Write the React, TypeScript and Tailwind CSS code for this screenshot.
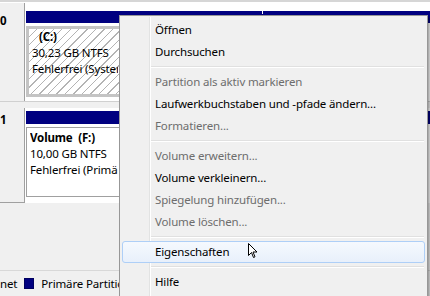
import React from 'react';

type Item = { label: string; disabled?: boolean; active?: boolean } | 'sep';

const menuItems: Item[] = [
  { label: 'Öffnen' },
  { label: 'Durchsuchen' },
  'sep',
  { label: 'Partition als aktiv markieren', disabled: true },
  { label: 'Laufwerkbuchstaben und -pfade ändern...' },
  { label: 'Formatieren...', disabled: true },
  'sep',
  { label: 'Volume erweitern...', disabled: true },
  { label: 'Volume verkleinern...' },
  { label: 'Spiegelung hinzufügen...', disabled: true },
  { label: 'Volume löschen...', disabled: true },
  'sep',
  { label: 'Eigenschaften', active: true },
  'sep',
  { label: 'Hilfe' },
];

function ContextMenu() {
  return (
    <div className="absolute left-[119px] top-[15px] w-[309px] h-[300px] border border-[#979797] bg-[#f0f0f0] pt-[3px] px-[2px] shadow-[2px_2px_2px_rgba(0,0,0,0.35)]">
      {/* gutter line */}
      <div className="absolute left-[29px] top-[1px] bottom-0 w-[2px] border-l border-[#e2e3e3] bg-white" />
      <div className="relative flex flex-col">
        {menuItems.map((item, i) =>
          item === 'sep' ? (
            <div key={i} className="h-[8px] flex items-center pl-[29px] pr-[1px]">
              <div className="w-full h-[2px] border-t border-[#e0e0e0] bg-white" />
            </div>
          ) : (
            <div
              key={i}
              className={`h-[22px] flex items-center pl-[32px] rounded-[3px] border ${
                item.active
                  ? 'border-[#aecff7] bg-[linear-gradient(#f5f9fe,#e8f0fb)]'
                  : 'border-transparent'
              } ${item.disabled ? 'text-[#6d6d6d]' : 'text-black'}`}
            >
              {item.label}
            </div>
          )
        )}
      </div>
    </div>
  );
}

function Cursor() {
  return (
    <svg className="absolute left-[248px] top-[243px]" width="10" height="16" viewBox="0 0 10 16">
      <path
        d="M0.5 0.5 L0.5 12.5 L3.5 9.5 L5.5 14.5 L7 13.8 L5 9 L9 9 Z"
        fill="#fff"
        stroke="#000"
        strokeWidth="1"
        strokeLinejoin="round"
      />
    </svg>
  );
}

export default function App() {
  return (
    <div className="relative w-[430px] h-[296px] overflow-hidden bg-[#f0f0f0] font-['Noto_Sans',sans-serif] text-[11.5px] tracking-[-0.15px] leading-[16px] text-black">
      <div className="h-[3px] bg-[#d6d6d6] border-b border-white" />

      {/* Disk 0 */}
      <div className="flex h-[98px]">
        <div className="w-[25px] bg-[#f0f0f0] border-r border-[#a0a0a0] pt-[10px] font-bold">0</div>
        <div className="flex-1 bg-white pt-[8px] pl-[1px]">
          <div className="relative h-[12px] bg-[#000080]">
            <div className="absolute left-[236px] top-0 w-[1px] h-[3px] bg-white" />
          </div>
          <div className="mt-[3px] w-[236px] h-[71px] border-[3px] border-[#c4c4c4] bg-[repeating-linear-gradient(135deg,#ffffff_0px,#ffffff_5px,#b4b4b4_5px,#b4b4b4_6px)] pl-[3px]">
            <div className="w-[86px] whitespace-nowrap overflow-hidden">
              <div className="font-bold pl-[7px]">(C:)</div>
              <div>30,23 GB NTFS</div>
              <div>Fehlerfrei (System, Startpartition)</div>
            </div>
          </div>
        </div>
      </div>

      <div className="h-[7px] bg-[#f0f0f0] border-t border-[#d0d0d0]" />

      {/* Disk 1 */}
      <div className="flex h-[95px]">
        <div className="w-[25px] bg-[#f0f0f0] border-r border-b border-[#a0a0a0] pt-[4px] font-bold">1</div>
        <div className="flex-1 bg-white pt-[3px] pl-[1px]">
          <div className="h-[13px] bg-[#000080]" />
          <div className="mt-[3px] mr-[4px] h-[70px] border border-[#a0a0a0] bg-white pl-[3px] pt-[2px]">
            <div className="w-[88px] whitespace-nowrap overflow-hidden">
              <div className="font-bold">Volume&nbsp; (F:)</div>
              <div>10,00 GB NTFS</div>
              <div>Fehlerfrei (Primäre Partition)</div>
            </div>
          </div>
        </div>
      </div>

      <div className="h-[67px]" />

      {/* legend */}
      <div className="flex items-center h-[26px] border-t border-[#d8d8d8] gap-[7px] whitespace-nowrap">
        <span>net</span>
        <span className="w-[10px] h-[11px] bg-[#000080] border border-[#000060]" />
        <span className="w-[80px] overflow-hidden">Primäre Partition</span>
      </div>

      <ContextMenu />
      <Cursor />
    </div>
  );
}
